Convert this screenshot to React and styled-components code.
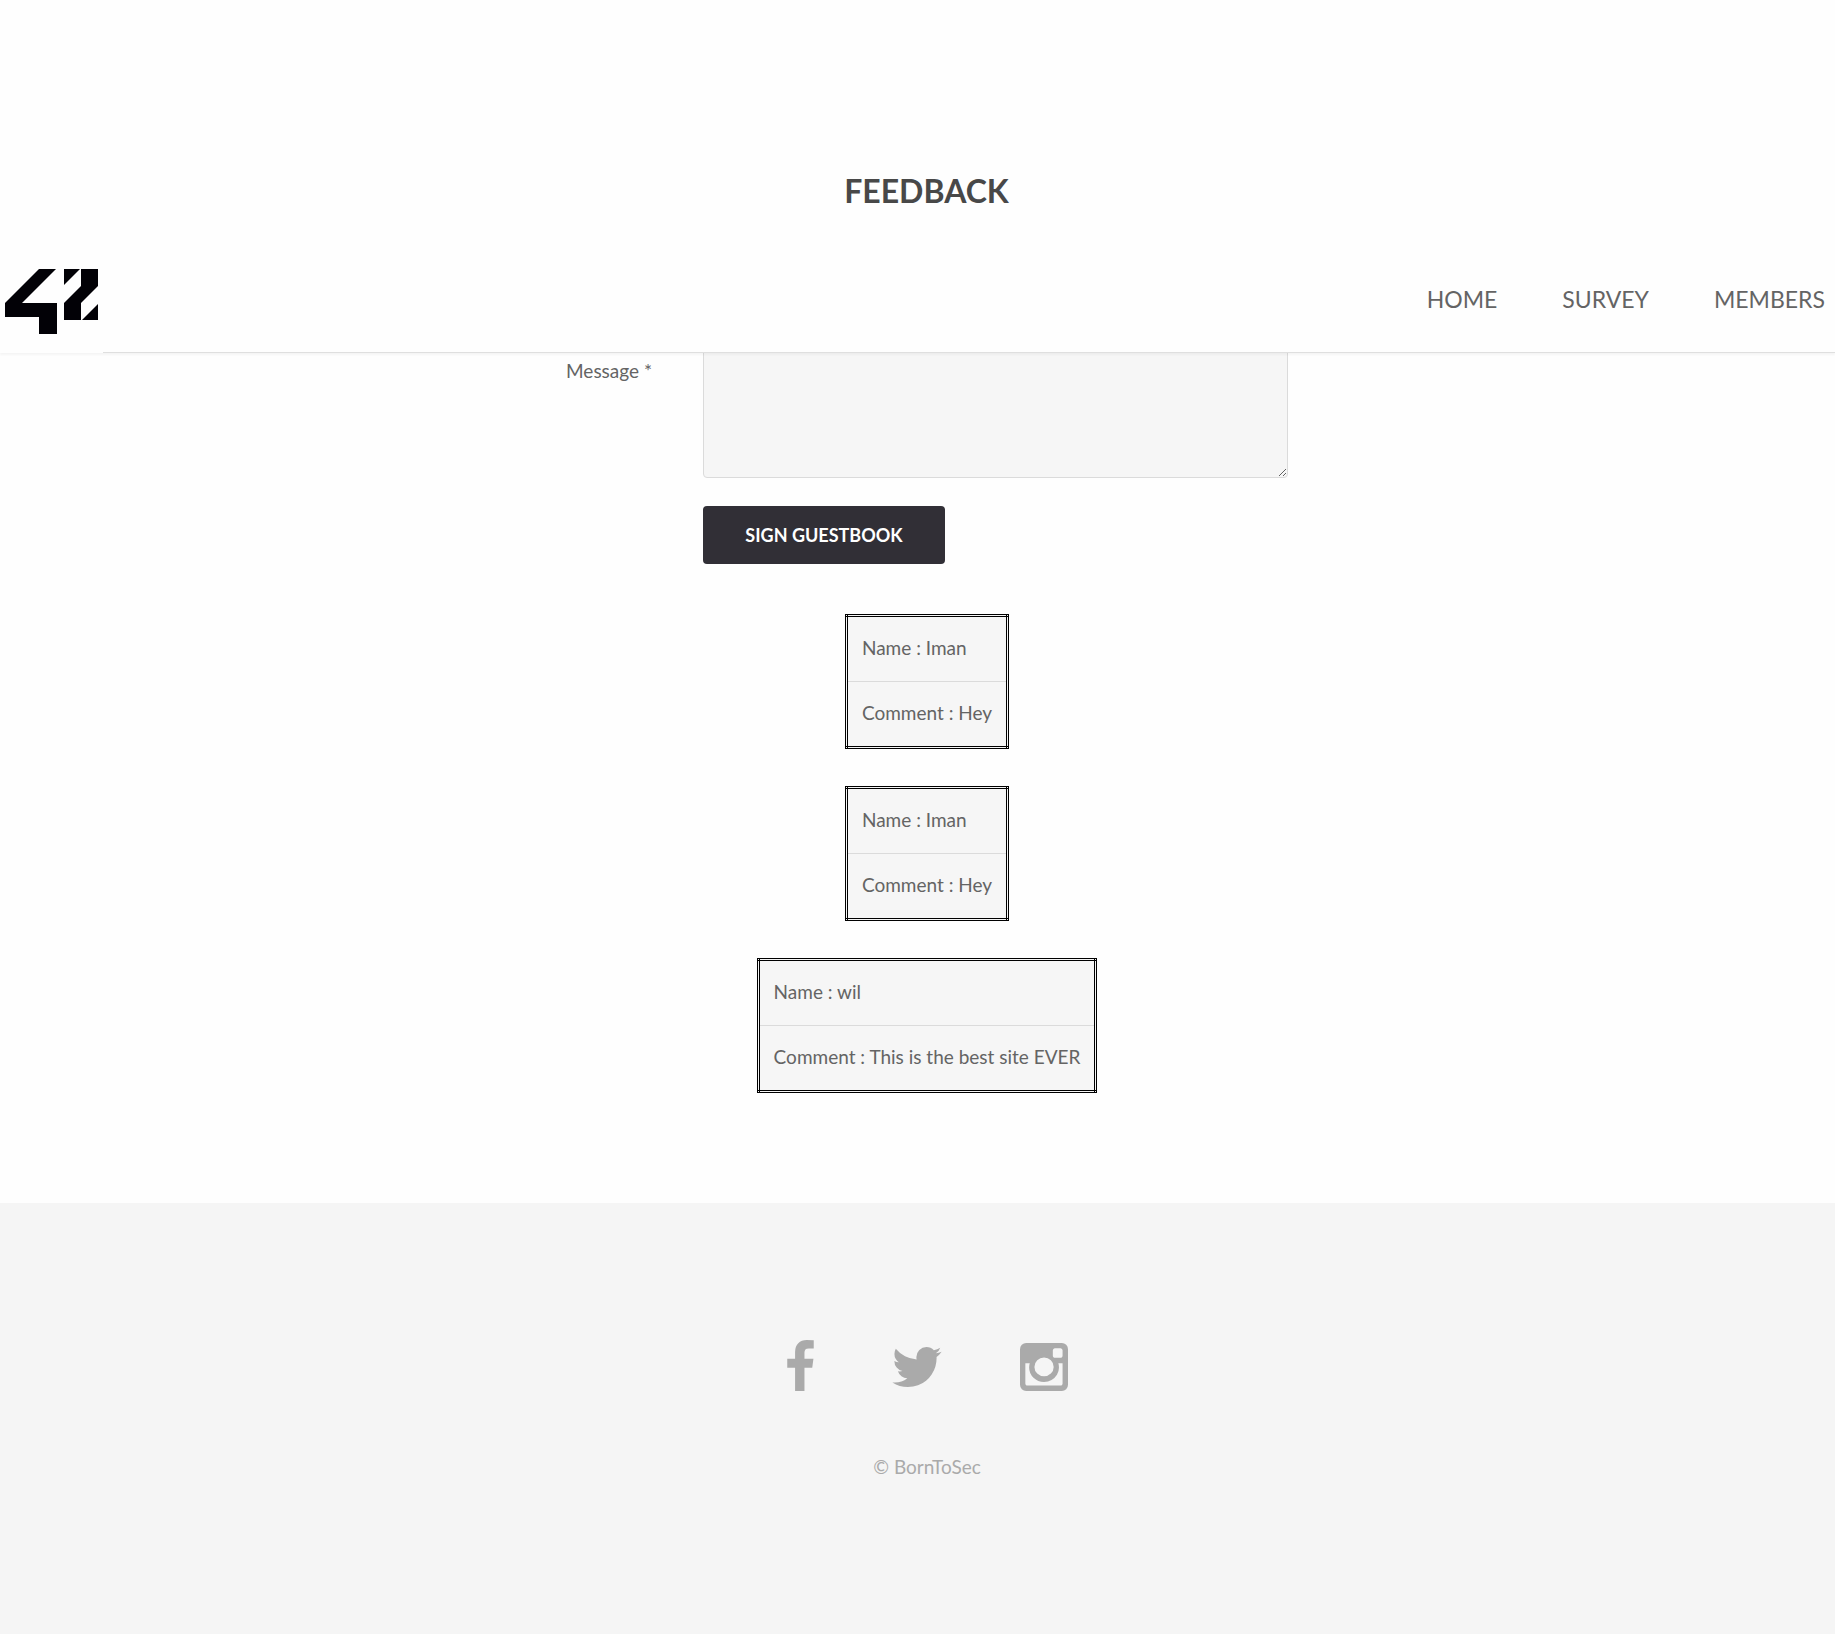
import React from "react";
import styled, { createGlobalStyle } from "styled-components";

const GlobalStyle = createGlobalStyle`
  *, *::before, *::after { box-sizing: border-box; }
  body {
    margin: 0;
    background: #fefefe;
    color: #646464;
    font-family: Lato, "Open Sans", sans-serif;
    font-size: 19px;
    line-height: 28px;
  }
  #root { min-height: 100vh; display: flex; flex-direction: column; }
`;

const Title = styled.h1`
  margin: 0;
  padding: 167px 0 37px 18px;
  color: #484848;
  font-size: 32px;
  line-height: 48px;
  font-weight: 700;
  text-align: center;
`;

const Header = styled.header`
  position: relative;
  z-index: 1;
  display: flex;
  justify-content: space-between;
  height: 101px;
  background: #fefefe;
  border-bottom: 1px solid #dfdfdf;
  box-shadow: 0 2px 2px rgba(0, 0, 0, 0.04);
`;

const LogoLink = styled.a`
  display: block;
  height: 101px;
  background: #fefefe;
`;

const Nav = styled.nav`
  display: flex;
  align-items: center;
  gap: 65px;
  padding: 0 10px 6px 0;
`;

const NavLink = styled.a`
  color: #646464;
  font-size: 23px;
  line-height: 32px;
  text-decoration: none;
`;

const Main = styled.main`
  display: flex;
  flex-direction: column;
  align-items: center;
  gap: 37px;
  margin-top: -87px;
  padding: 0 0 110px 19px;
`;

const Form = styled.form`
  display: grid;
  grid-template-columns: 109px minmax(0, 585px);
  gap: 28px;
  align-items: center;
  margin-bottom: 13px;
`;

const Label = styled.label`
  padding-bottom: 3px;
`;

const Message = styled.textarea`
  display: block;
  width: 100%;
  height: 212px;
  padding: 12px;
  border: 1px solid #dbdbdb;
  border-radius: 4px;
  background: #f6f6f6;
  color: inherit;
  font: inherit;
  outline: 0;
  resize: both;
`;

const SignButton = styled.button`
  grid-column: 2;
  justify-self: start;
  width: 242px;
  height: 58px;
  padding: 0;
  border: 0;
  border-radius: 4px;
  background: #312f36;
  color: #fff;
  font: inherit;
  font-size: 18px;
  font-weight: 700;
  text-align: center;
`;

const Entry = styled.table`
  border: 3px double #000;
  border-collapse: collapse;
  background: #f6f6f6;
`;

const Cell = styled.td`
  height: 66px;
  padding: 0 14px 3px;
  white-space: nowrap;
  tr + tr > & { border-top: 1px solid #dbdbdb; }
`;

const Footer = styled.footer`
  flex: 1;
  display: flex;
  flex-direction: column;
  align-items: center;
  gap: 62px;
  padding: 137px 0 150px 19px;
  background: #f5f5f5;
  color: #aaa;
`;

const Social = styled.div`
  display: flex;
  align-items: flex-end;
  gap: 78px;
`;

const SocialLink = styled.a`
  display: block;
  color: inherit;
  svg { display: block; fill: currentColor; }
`;

const Copyright = styled.p`
  margin: 0;
`;

const pages = ["HOME", "SURVEY", "MEMBERS"];

const entries = [
  { name: "Iman", comment: "Hey" },
  { name: "Iman", comment: "Hey" },
  { name: "wil", comment: "This is the best site EVER" },
];

const networks = [
  {
    id: "facebook",
    width: 27,
    height: 51,
    box: "479 0 864 1664",
    path: "M1343 12v264h-157q-86 0-116 36t-30 108v189h293l-39 296h-254v759h-306v-759h-255v-296h255v-218q0-186 104-288.5t277-102.5q147 0 228 12z",
  },
  {
    id: "twitter",
    width: 50,
    height: 44,
    box: "108 256 1576 1408",
    path: "M1684 408q-67 98-162 167 1 14 1 42 0 130-38 259.5t-115.5 248.5-184.5 210.5-258 146-323 54.5q-271 0-496-145 35 4 78 4 225 0 401-138-105-2-188-64.5t-114-159.5q33 5 61 5 43 0 85-11-112-23-185.5-111.5t-73.5-205.5v-4q68 38 146 41-66-44-105-115t-39-154q0-88 44-163 121 149 294.5 238.5t371.5 99.5q-8-38-8-74 0-134 94.5-228.5t228.5-94.5q140 0 236 102 109-21 205-78-37 115-142 178 93-10 186-50z",
  },
  {
    id: "instagram",
    width: 48,
    height: 48,
    box: "0 128 1536 1536",
    path: "M1362 1426v-648h-135q20 63 20 131 0 126-64 232.5t-174 168.5-240 62q-197 0-337-135.5t-140-327.5q0-68 20-131h-141v648q0 26 17.5 43.5t43.5 17.5h1069q25 0 43-17.5t18-43.5zm-284-533q0-124-90.5-211.5t-218.5-87.5q-127 0-217.5 87.5t-90.5 211.5 90.5 211.5 217.5 87.5q128 0 218.5-87.5t90.5-211.5zm284-360v-165q0-28-20-48.5t-49-20.5h-174q-29 0-49 20.5t-20 48.5v165q0 29 20 49t49 20h174q29 0 49-20t20-49zm174-208v1142q0 81-58 139t-139 58h-1142q-81 0-139-58t-58-139v-1142q0-81 58-139t139-58h1142q81 0 139 58t58 139z",
  },
];

function Logo() {
  return (
    <svg width="103" height="101" viewBox="0 0 103 101" fill="#020106" aria-hidden="true">
      <path d="M39 17H56L22 51H57V82H39V65H5V51Z" />
      <path d="M64 17H80L64 33Z" />
      <path d="M81 17H98V34L81 51V68H64V51L81 34Z" />
      <path d="M98 52V68H82Z" />
    </svg>
  );
}

export default function App() {
  return (
    <>
      <GlobalStyle />
      <Title>FEEDBACK</Title>
      <Header>
        <LogoLink href="#home"><Logo /></LogoLink>
        <Nav>
          {pages.map((page) => (
            <NavLink key={page} href={"#" + page.toLowerCase()}>{page}</NavLink>
          ))}
        </Nav>
      </Header>
      <Main>
        <Form onSubmit={(e) => e.preventDefault()}>
          <Label htmlFor="message">Message *</Label>
          <Message id="message" />
          <SignButton type="submit">SIGN GUESTBOOK</SignButton>
        </Form>
        {entries.map((entry, i) => (
          <Entry key={i}>
            <tbody>
              <tr><Cell>Name : {entry.name}</Cell></tr>
              <tr><Cell>Comment : {entry.comment}</Cell></tr>
            </tbody>
          </Entry>
        ))}
      </Main>
      <Footer>
        <Social>
          {networks.map((n) => (
            <SocialLink key={n.id} href={"#" + n.id}>
              <svg width={n.width} height={n.height} viewBox={n.box} aria-hidden="true">
                <path d={n.path} />
              </svg>
            </SocialLink>
          ))}
        </Social>
        <Copyright>© BornToSec</Copyright>
      </Footer>
    </>
  );
}
